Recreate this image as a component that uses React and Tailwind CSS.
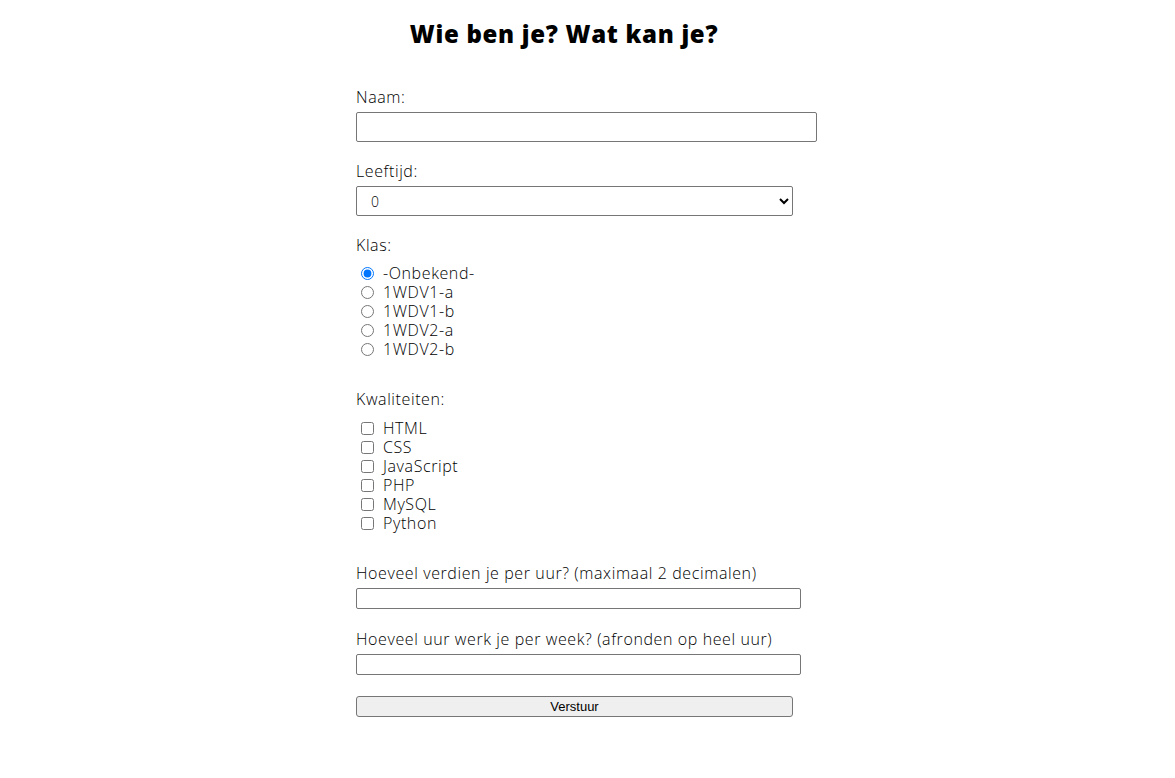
import React from 'react';

const klassen = ['-Onbekend-', '1WDV1-a', '1WDV1-b', '1WDV2-a', '1WDV2-b'];
const kwaliteiten = ['HTML', 'CSS', 'JavaScript', 'PHP', 'MySQL', 'Python'];

export default function App() {
  return (
    <div className="min-h-screen bg-white text-black font-['Open_Sans',sans-serif] font-light">
      <div className="pl-[356px] pt-[19px]">
        {/* Title */}
        <h1 className="w-[416px] text-center text-[24px] leading-[30px] font-extrabold tracking-[0.7px]">
          Wie ben je? Wat kan je?
        </h1>

        <form className="mt-[39px] flex flex-col text-[16px] leading-[19px] tracking-[0.6px]">
          {/* Naam */}
          <label htmlFor="naam">Naam:</label>
          <input
            id="naam"
            type="text"
            className="mt-[5px] h-[30px] w-[461px] border border-[#767676] rounded-[2px] bg-white"
          />

          {/* Leeftijd */}
          <label htmlFor="leeftijd" className="mt-[20px]">Leeftijd:</label>
          <select
            id="leeftijd"
            defaultValue="0"
            className="mt-[5px] h-[30px] w-[437px] border border-[#767676] rounded-[2px] bg-white pl-[10px] text-[14px]"
          >
            <option value="0">0</option>
          </select>

          {/* Klas */}
          <span className="mt-[20px]">Klas:</span>
          <div className="mt-[9px] flex flex-col">
            {klassen.map((k, i) => (
              <label key={k} className="flex h-[19px] items-center">
                <input
                  type="radio"
                  name="klas"
                  defaultChecked={i === 0}
                  className="ml-[5px] mr-[9px] h-[13px] w-[13px]"
                />
                <span className="leading-[19px]">{k}</span>
              </label>
            ))}
          </div>

          {/* Kwaliteiten */}
          <span className="mt-[31px]">Kwaliteiten:</span>
          <div className="mt-[10px] flex flex-col">
            {kwaliteiten.map((k) => (
              <label key={k} className="flex h-[19px] items-center">
                <input
                  type="checkbox"
                  className="ml-[5px] mr-[9px] h-[13px] w-[13px]"
                />
                <span className="leading-[19px]">{k}</span>
              </label>
            ))}
          </div>

          {/* Uurloon */}
          <label htmlFor="loon" className="mt-[31px]">
            Hoeveel verdien je per uur? (maximaal 2 decimalen)
          </label>
          <input
            id="loon"
            type="text"
            className="mt-[5px] h-[21px] w-[445px] border border-[#767676] rounded-[2px] bg-white"
          />

          {/* Uren */}
          <label htmlFor="uren" className="mt-[21px]">
            Hoeveel uur werk je per week? (afronden op heel uur)
          </label>
          <input
            id="uren"
            type="text"
            className="mt-[5px] h-[21px] w-[445px] border border-[#767676] rounded-[2px] bg-white"
          />

          <button
            type="submit"
            className="mt-[21px] h-[21px] w-[437px] border border-[#767676] rounded-[3px] bg-[#efefef] font-['Liberation_Sans',Arial,sans-serif] font-normal tracking-normal text-[13px] leading-[19px]"
          >
            Verstuur
          </button>
        </form>
      </div>
    </div>
  );
}
